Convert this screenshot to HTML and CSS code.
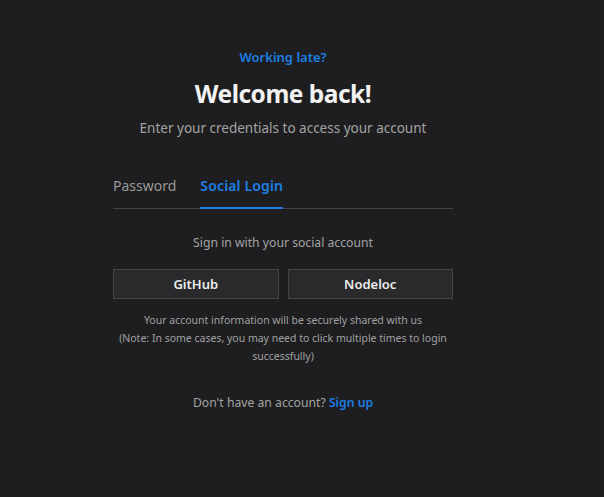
FILE: index.html
```html
<!DOCTYPE html>
<html lang="en">
<head>
<meta charset="utf-8">
<title>Login</title>
<link rel="stylesheet" href="styles.css">
</head>
<body>
<div class="page">
  <main class="card">
    <p class="eyebrow">Working late?</p>
    <h1 class="title">Welcome back!</h1>
    <p class="subtitle">Enter your credentials to access your account</p>
    <nav class="tabs">
      <span class="tab">Password</span>
      <span class="tab active">Social Login</span>
    </nav>
    <p class="hint">Sign in with your social account</p>
    <div class="providers">
      <button class="provider">GitHub</button>
      <button class="provider">Nodeloc</button>
    </div>
    <p class="note">Your account information will be securely shared with us<br>(Note: In some cases, you may need to click multiple times to login successfully)</p>
    <p class="signup">Don't have an account? <a class="link" href="#">Sign up</a></p>
  </main>
</div>
</body>
</html>
```
FILE: styles.css
```css
* { box-sizing: border-box; }
html, body {
  margin: 0;
  padding: 0;
  background: #1e1e20;
  height: 100%;
}
body {
  font-family: "Noto Sans", "Open Sans", sans-serif;
  color: #a6a6a6;
}
.page {
  display: flex;
  justify-content: center;
  padding: 47px 38px 0 0;
}
.card {
  width: 340px;
  display: flex;
  flex-direction: column;
  align-items: stretch;
  text-align: center;
}
.eyebrow {
  margin: 0;
  font-size: 13px;
  font-weight: 600;
  line-height: 20px;
  color: #1d7fe3;
}
.title {
  margin: 10px 0 0;
  font-size: 24.5px;
  font-weight: 700;
  line-height: 34px;
  color: #f2f2f2;
  letter-spacing: -0.5px;
}
.subtitle {
  margin: 7px 0 0;
  font-size: 13.5px;
  line-height: 20px;
  color: #a3a3a3;
}
.tabs {
  margin-top: 36px;
  display: flex;
  gap: 24px;
  border-bottom: 1px solid #444446;
}
.tab {
  font-size: 14px;
  line-height: 20px;
  padding: 2px 0 11px;
  color: #9a9a9a;
  border-bottom: 2px solid transparent;
  margin-bottom: -1px;
}
.tab.active {
  color: #1d7fe3;
  font-weight: 600;
  border-bottom-color: #1d7fe3;
  letter-spacing: 0.15px;
}
.hint {
  margin: 24px 0 0;
  font-size: 12.2px;
  line-height: 20px;
  color: #a3a3a3;
}
.providers {
  margin-top: 16px;
  display: grid;
  grid-template-columns: 1fr 1fr;
  gap: 9px;
}
.provider {
  height: 30px;
  background: #2a2a2c;
  border: 1px solid #454547;
  border-radius: 0;
  color: #ededed;
  font-family: inherit;
  font-size: 13px;
  font-weight: 600;
  padding: 0;
}
.note {
  margin: 12px 0 0;
  font-size: 10.5px;
  line-height: 18px;
  color: #a0a0a0;
}
.signup {
  margin: 28px 0 0;
  font-size: 12.2px;
  line-height: 20px;
  color: #a3a3a3;
}
.link {
  color: #1d7fe3;
  font-weight: 600;
  text-decoration: none;
}
```
